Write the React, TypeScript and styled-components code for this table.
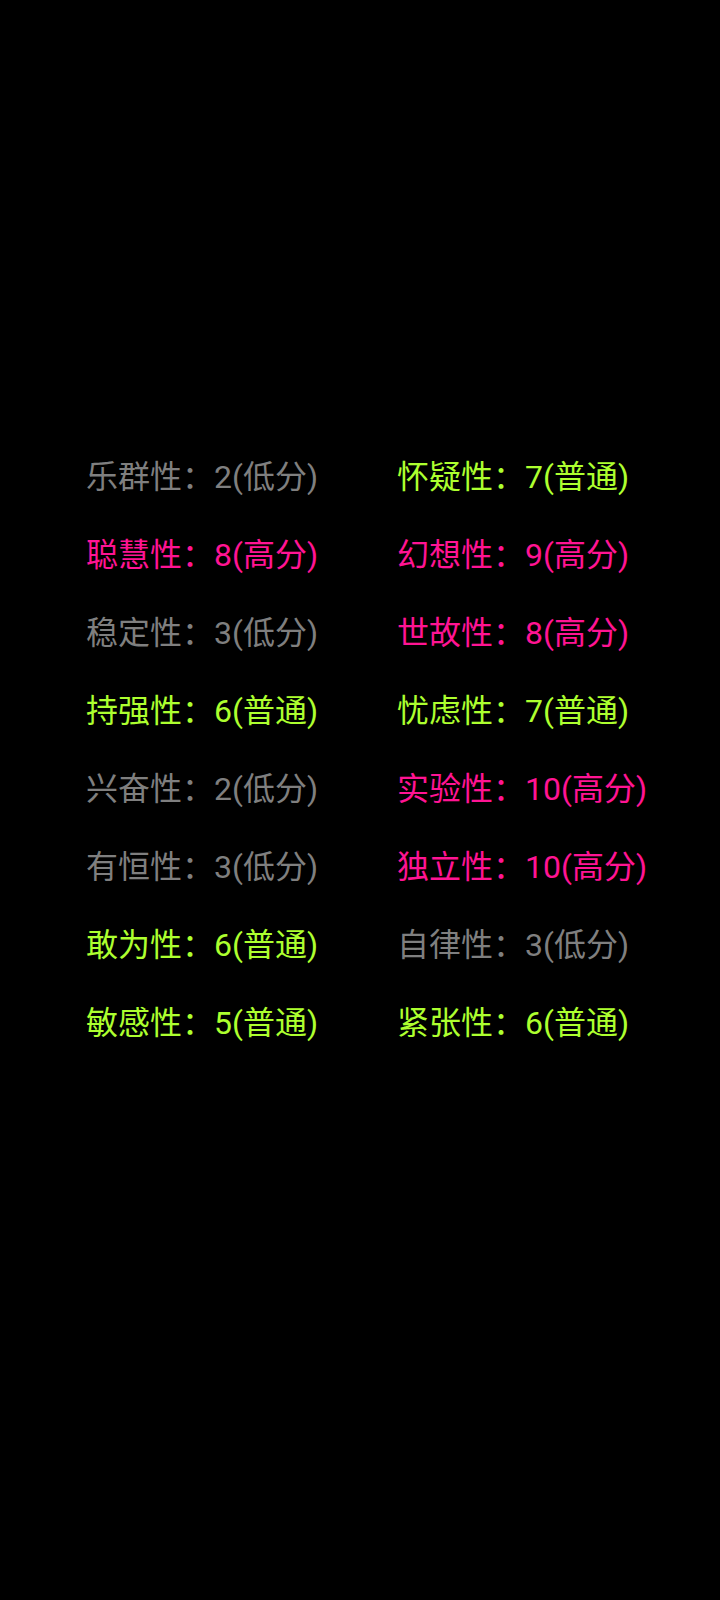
import React from "react";
import styled, { createGlobalStyle } from "styled-components";

const Global = createGlobalStyle`
  html, body { margin: 0; padding: 0; background: #000; }
  body { font-family: Roboto, "Noto Sans CJK SC", sans-serif; }
`;

const Page = styled.div`
  min-height: 1600px;
  background: #000;
  padding: 438px 0 0 86px;
  box-sizing: border-box;
`;

const Grid = styled.div`
  display: grid;
  grid-template-columns: 311px auto;
  grid-auto-rows: 78px;
  align-items: center;
`;

type Level = "low" | "mid" | "high";
const colors: Record<Level, string> = {
  low: "#7f7f7f",
  mid: "#adff2f",
  high: "#ff1493",
};

const Item = styled.div<{ $level: Level }>`
  font-size: 32px;
  line-height: 78px;
  white-space: nowrap;
  color: ${(p) => colors[p.$level]};
`;

const data: [string, number][] = [
  ["乐群性", 2], ["怀疑性", 7],
  ["聪慧性", 8], ["幻想性", 9],
  ["稳定性", 3], ["世故性", 8],
  ["持强性", 6], ["忧虑性", 7],
  ["兴奋性", 2], ["实验性", 10],
  ["有恒性", 3], ["独立性", 10],
  ["敢为性", 6], ["自律性", 3],
  ["敏感性", 5], ["紧张性", 6],
];

const level = (n: number): Level => (n <= 3 ? "low" : n >= 8 ? "high" : "mid");
const label: Record<Level, string> = { low: "低分", mid: "普通", high: "高分" };

export default function App() {
  return (
    <>
      <Global />
      <Page>
        <Grid>
          {data.map(([name, v]) => {
            const l = level(v);
            return (
              <Item key={name} $level={l}>
                {name}：{v}({label[l]})
              </Item>
            );
          })}
        </Grid>
      </Page>
    </>
  );
}
